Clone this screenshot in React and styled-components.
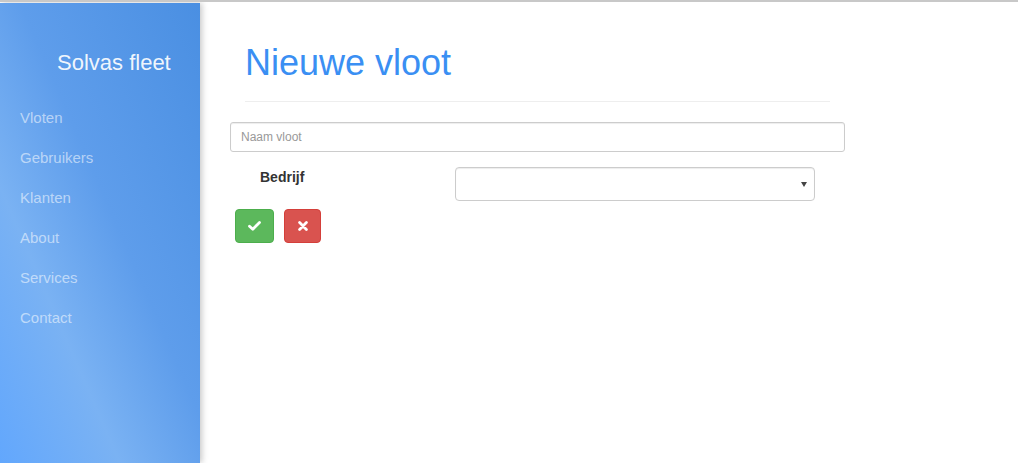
import React from 'react';
import styled, { createGlobalStyle } from 'styled-components';

const GlobalStyle = createGlobalStyle`
  * {
    box-sizing: border-box;
  }
  html, body {
    margin: 0;
    padding: 0;
    background: #fff;
  }
  body {
    border-top: 2px solid #c8c8c8;
    padding-top: 1px;
    font-family: 'Liberation Sans', Arial, sans-serif;
    font-size: 14px;
    color: #333;
    overflow: hidden;
  }
`;

const Layout = styled.div`
  display: flex;
  height: 460px;
`;

const Sidebar = styled.aside`
  flex: 0 0 200px;
  display: flex;
  flex-direction: column;
  background: linear-gradient(
    to top right,
    #62a7fd 0%,
    #7ab2f3 30%,
    #5e9deb 55%,
    #4a8fe2 100%
  );
  box-shadow: 2px 0 6px rgba(0, 0, 0, 0.22);
  position: relative;
  z-index: 1;
`;

const Brand = styled.div`
  margin-top: 48px;
  padding-left: 57px;
  font-size: 22px;
  line-height: 24px;
  color: rgba(255, 255, 255, 0.92);
`;

const Nav = styled.nav`
  display: flex;
  flex-direction: column;
  margin-top: 23px;
`;

const NavLink = styled.a`
  display: block;
  padding-left: 20px;
  font-size: 15px;
  line-height: 40px;
  color: rgba(255, 255, 255, 0.55);
  text-decoration: none;
`;

const Main = styled.main`
  flex: 1;
  padding: 19px 0 0 30px;
`;

const Header = styled.header`
  width: 585px;
  margin-left: 15px;
`;

const Title = styled.h1`
  margin: 21px 0 0 0;
  font-size: 36px;
  line-height: 40px;
  font-weight: normal;
  color: #3a8ff3;
`;

const Rule = styled.hr`
  margin: 18px 0 20px;
  border: 0;
  border-top: 1px solid #eee;
`;

const Form = styled.form`
  width: 615px;
  display: flex;
  flex-direction: column;
`;

const TextInput = styled.input`
  height: 30px;
  padding: 5px 10px;
  font-family: inherit;
  font-size: 12px;
  border: 1px solid #ccc;
  border-radius: 3px;
  box-shadow: inset 0 1px 1px rgba(0, 0, 0, 0.075);
  outline: none;

  &::placeholder {
    color: #999;
  }
`;

const FieldRow = styled.div`
  display: flex;
  align-items: flex-start;
  margin-top: 15px;
  padding-left: 30px;
`;

const Label = styled.label`
  width: 195px;
  padding-top: 0;
  font-weight: bold;
  line-height: 20px;
  color: #333;
`;

const SelectWrap = styled.div`
  position: relative;
  width: 360px;

  &::after {
    content: '';
    position: absolute;
    right: 8px;
    top: 15px;
    border-left: 3px solid transparent;
    border-right: 3px solid transparent;
    border-top: 5px solid #444;
    pointer-events: none;
  }
`;

const Select = styled.select`
  width: 100%;
  height: 34px;
  padding: 6px 12px;
  font-family: inherit;
  font-size: 14px;
  background: #fff;
  border: 1px solid #ccc;
  border-radius: 4px;
  box-shadow: inset 0 1px 1px rgba(0, 0, 0, 0.075);
  appearance: none;
  outline: none;
`;

const Actions = styled.div`
  display: flex;
  gap: 10px;
  margin-top: 8px;
  padding-left: 5px;
`;

const IconButton = styled.button`
  display: flex;
  align-items: center;
  justify-content: center;
  width: ${({ $w }) => $w}px;
  height: 34px;
  padding: 0;
  border-radius: 4px;
  border: 1px solid ${({ $variant }) => ($variant === 'danger' ? '#d43f3a' : '#4cae4c')};
  background: ${({ $variant }) => ($variant === 'danger' ? '#d9534f' : '#5cb85c')};
  cursor: pointer;
`;

const CheckIcon = () => (
  <svg width="13" height="10" viewBox="0 0 13 10">
    <path d="M1.5 5.2 L4.8 8.3 L11.5 1.6" fill="none" stroke="#fff" strokeWidth="2.8" strokeLinecap="round" strokeLinejoin="round" />
  </svg>
);

const CrossIcon = () => (
  <svg width="10" height="10" viewBox="0 0 10 10">
    <path d="M1.6 1.6 L8.4 8.4 M8.4 1.6 L1.6 8.4" fill="none" stroke="#fff" strokeWidth="2.8" strokeLinecap="round" />
  </svg>
);

const navItems = ['Vloten', 'Gebruikers', 'Klanten', 'About', 'Services', 'Contact'];

const App = () => {
  return (
    <>
      <GlobalStyle />
      <Layout>
        <Sidebar>
          <Brand>Solvas fleet</Brand>
          <Nav>
            {navItems.map((item) => (
              <NavLink key={item} href="#">
                {item}
              </NavLink>
            ))}
          </Nav>
        </Sidebar>
        <Main>
          <Header>
            <Title>Nieuwe vloot</Title>
            <Rule />
          </Header>
          <Form onSubmit={(e) => e.preventDefault()}>
            <TextInput type="text" placeholder="Naam vloot" />
            <FieldRow>
              <Label>Bedrijf</Label>
              <SelectWrap>
                <Select defaultValue="">
                  <option value="" />
                </Select>
              </SelectWrap>
            </FieldRow>
            <Actions>
              <IconButton type="submit" $w={39}>
                <CheckIcon />
              </IconButton>
              <IconButton type="button" $variant="danger" $w={37}>
                <CrossIcon />
              </IconButton>
            </Actions>
          </Form>
        </Main>
      </Layout>
    </>
  );
};

export default App;
